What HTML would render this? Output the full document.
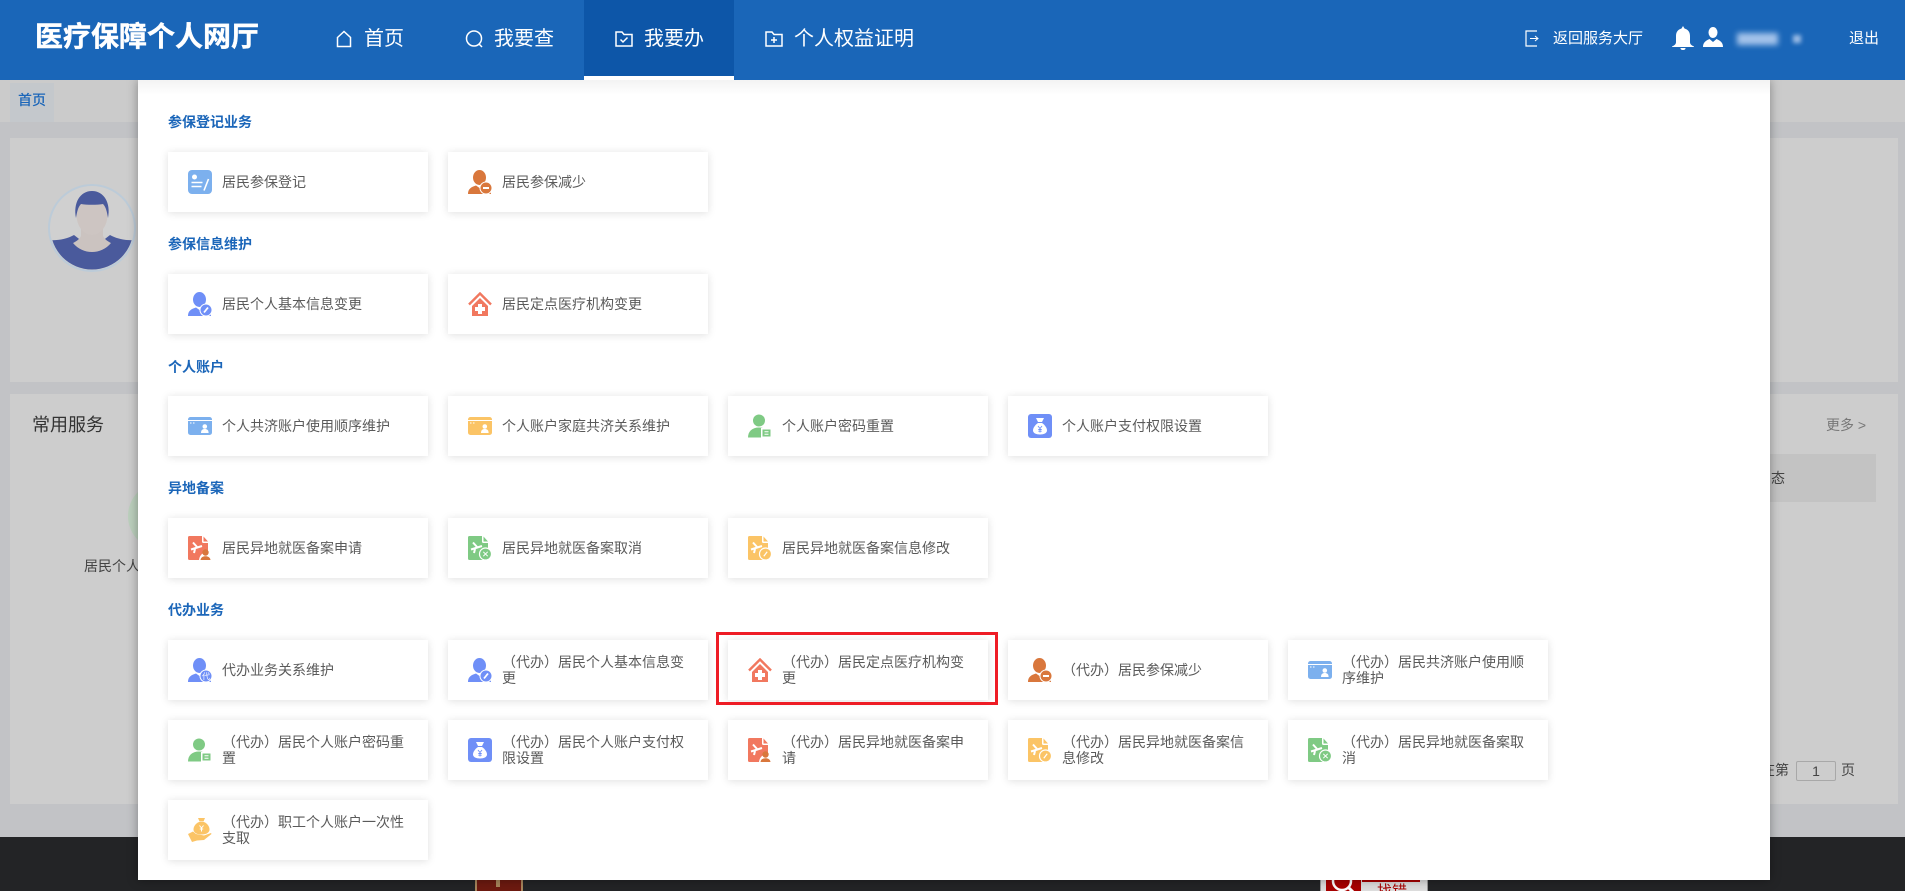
<!DOCTYPE html>
<html lang="zh-CN"><head><meta charset="utf-8"><title>医疗保障个人网厅</title>
<style>
*{box-sizing:border-box}
html,body{margin:0;padding:0;width:1905px;height:891px;overflow:hidden;background:#c2c3c6}
body{font-family:"Liberation Sans","Noto Sans CJK SC",sans-serif}
#root{position:absolute;left:0;top:0;width:1905px;height:891px;overflow:hidden;background:#c2c3c6}
.a{position:absolute;white-space:nowrap}
#hd{left:0;top:0;width:1905px;height:80px;background:#1a66b8;color:#fff;z-index:2}
.nav{position:absolute;top:24px;font-size:20px;line-height:30px;color:#fff}
.ni{position:absolute;fill:none;stroke:#fff;stroke-width:1.5}
#pn{left:138px;top:80px;width:1632px;height:800px;background:#fff;box-shadow:0 0 10px rgba(0,0,0,.35);z-index:1}
#pn:before{content:"";position:absolute;left:0;top:0;width:100%;height:15px;background:linear-gradient(#f3f3f3,#fff)}
.t{position:absolute;left:30px;font-size:14px;line-height:20px;font-weight:700;color:#1b66b9}
.c{position:absolute;width:260px;height:60px;background:#fff;box-shadow:0 1px 8px rgba(0,0,0,.13);color:#5a5a5a;font-size:14px;line-height:16px}
.c svg{position:absolute;left:20px;top:18px;width:24px;height:24px}
.c span{position:absolute;left:54px;top:50%;transform:translateY(-50%);white-space:nowrap}
</style></head><body>
<svg width="0" height="0" style="position:absolute">
<defs>
<symbol id="reg" viewBox="0 0 24 24"><rect width="24" height="24" rx="4" fill="#7cb0ee"/><circle cx="6.500" cy="7" r="2.500" fill="#fff"/><path d="M3.500 12.500h11M3.500 16.500h10" stroke="#fff" stroke-width="1.600"/><path d="M20.500 9l-4.500 11.500" stroke="#fff" stroke-width="1.600"/></symbol>
<symbol id="um" viewBox="0 0 24 24"><ellipse cx="11.500" cy="7.500" rx="6.500" ry="7.500" fill="#d9773c"/><path d="M0 24c0-5 3-7 8-8.500l3.500 2.500 3.500-2.500c5 1.500 8 3.500 8 8.500z" fill="#d9773c"/><circle cx="18" cy="18" r="6.500" fill="#fff"/><circle cx="18" cy="18" r="5.500" fill="#d9773c"/><path d="M15 18h6" stroke="#fff" stroke-width="2"/></symbol>
<symbol id="ue" viewBox="0 0 24 24"><ellipse cx="11.500" cy="7.500" rx="6.500" ry="7.500" fill="#6f8ff7"/><path d="M0 24c0-5 3-7 8-8.500l3.500 2.500 3.500-2.500c5 1.500 8 3.500 8 8.500z" fill="#6f8ff7"/><circle cx="18" cy="18" r="6.500" fill="#fff"/><circle cx="18" cy="18" r="5.500" fill="#6f8ff7"/><path d="M16 20.500l4-5" stroke="#fff" stroke-width="1.800"/></symbol>
<symbol id="ud" viewBox="0 0 24 24"><ellipse cx="11.500" cy="7.500" rx="6.500" ry="7.500" fill="#6f8ff7"/><path d="M0 24c0-5 3-7 8-8.500l3.500 2.500 3.500-2.500c5 1.500 8 3.500 8 8.500z" fill="#6f8ff7"/><circle cx="18" cy="18" r="6.500" fill="#fff"/><circle cx="18" cy="18" r="5.500" fill="#6f8ff7"/><text x="18" y="21" font-size="8" fill="#fff" text-anchor="middle" font-family="Noto Sans CJK SC, sans-serif">代</text></symbol>
<symbol id="hs" viewBox="0 0 24 24"><path d="M1 12.500L12 1.500l11 11" fill="none" stroke="#f1785f" stroke-width="2.400"/><path d="M4 14L12 6l8 8v10H4z" fill="#f1785f"/><path d="M10 12h4v3h3v4h-3v3h-4v-3H7v-4h3z" fill="#fff"/></symbol>
<symbol id="cb" viewBox="0 0 24 24"><rect y="3" width="24" height="18" rx="2.500" fill="#7cb0ee"/><path d="M0 6.500h24" stroke="#fff"/><path d="M2 9h1.500M5 9h1.500" stroke="#fff"/><circle cx="16.800" cy="12.500" r="2.300" fill="#fff"/><path d="M13 19c0-3 1.500-4 3.800-4s3.800 1 3.800 4z" fill="#fff"/></symbol>
<symbol id="cy" viewBox="0 0 24 24"><rect y="3" width="24" height="18" rx="2.500" fill="#fbc466"/><path d="M0 6.500h24" stroke="#fff"/><path d="M2 9h1.500M5 9h1.500" stroke="#fff"/><circle cx="16.800" cy="12.500" r="2.300" fill="#fff"/><path d="M13 19c0-3 1.500-4 3.800-4s3.800 1 3.800 4z" fill="#fff"/></symbol>
<symbol id="ug" viewBox="0 0 24 24"><circle cx="11" cy="6.500" r="6" fill="#7fca84"/><path d="M0 23.500c0-6 4-10 11-10s11 4 11 10z" fill="#7fca84"/><rect x="13" y="14" width="11" height="10" fill="#fff"/><rect x="14.500" y="15.500" width="8" height="7" fill="#7fca84"/><path d="M16.500 17.800h4M16.500 20.300h4" stroke="#fff"/></symbol>
<symbol id="bg" viewBox="0 0 24 24"><rect width="24" height="24" rx="3" fill="#6f8ff7"/><path d="M8 4h8l-2 4h-4z" fill="#fff"/><path d="M10 9h4c3 2 5 5 5 7.500C19 19 16 20.500 12 20.500S5 19 5 16.500C5 14 7 11 10 9z" fill="#fff"/><path d="M10 12l2 2.500 2-2.500M12 14.500v4M10.300 15.500h3.400M10.300 17.200h3.400" stroke="#6f8ff7" fill="none" stroke-width=".9"/></symbol>
<symbol id="dr" viewBox="0 0 24 24"><path d="M1.500 0H14v5.500c0 1 .5 1.500 1.500 1.500H20v17H1.500A1.500 1.500 0 0 1 0 22.500V1.500A1.500 1.500 0 0 1 1.500 0zM15.500 .5L20 5.500h-4.500z" fill="#f1785f"/><path d="M3 13.500L14 10M5 6.500l4.500 5M7 13l-1 4" stroke="#fff" stroke-width="2" fill="none"/><path d="M11 24c.5-4 2.500-6.500 6-7.500 3 1 6 3.500 6.500 7.500z" fill="#fff"/><circle cx="17.500" cy="16.500" r="3.200" fill="#d9773c"/><path d="M12.500 24c.3-2.500 2.200-3.800 5-3.800s4.700 1.300 5 3.800z" fill="#d9773c"/></symbol>
<symbol id="dg" viewBox="0 0 24 24"><path d="M1.500 0H14v5.500c0 1 .5 1.500 1.500 1.500H20v17H1.500A1.500 1.500 0 0 1 0 22.500V1.500A1.500 1.500 0 0 1 1.500 0zM15.500 .5L20 5.500h-4.500z" fill="#7fca84"/><path d="M3 13.500L14 10M5 6.500l4.500 5M7 13l-1 4" stroke="#fff" stroke-width="2" fill="none"/><circle cx="17.500" cy="18" r="6" fill="#7fca84" stroke="#fff" stroke-width="1.200"/><path d="M15.300 15.800l4.400 4.400M19.700 15.800l-4.400 4.400" stroke="#fff" stroke-width="1"/></symbol>
<symbol id="dy" viewBox="0 0 24 24"><path d="M1.500 0H14v5.500c0 1 .5 1.500 1.500 1.500H20v17H1.500A1.500 1.500 0 0 1 0 22.500V1.500A1.500 1.500 0 0 1 1.500 0zM15.500 .5L20 5.500h-4.500z" fill="#fbc466"/><path d="M3 13.500L14 10M5 6.500l4.500 5M7 13l-1 4" stroke="#fff" stroke-width="2" fill="none"/><circle cx="17.500" cy="18" r="6" fill="#fbc466" stroke="#fff" stroke-width="1.200"/><path d="M15.800 20.200l3.400-4.400" stroke="#fff" stroke-width="1.200"/></symbol>
<symbol id="hm" viewBox="0 0 24 24"><path d="M10 0h7l-1.500 3.500h-4z" fill="#fbc466"/><path d="M11 4h5c3.500 1.500 5.500 4.500 5.500 7.500 0 3-3 5-8 5s-8-2-8-5c0-3 2-6 5.500-7.500z" fill="#fbc466"/><path d="M11.500 7.500l2 2.500 2-2.500M13.500 10v3.500M11.800 11h3.400" stroke="#fff" fill="none"/><path d="M0 16l5-2.500 3 2.500 8 1.500 7-2.500.5 1L16 22l-7 .5L4 24z" fill="#fbc466"/></symbol>
</defs></svg>

<div id="root">
<!-- background page -->
<div class="a" style="left:0;top:80px;width:1905px;height:42px;background:#cbcbcb"></div>
<div class="a" style="left:10px;top:83px;width:44px;height:39px;background:#c4c8cc;color:#1b66b9;font-size:14px;line-height:34px;text-align:center;font-weight:500">首页</div>
<div class="a" style="left:10px;top:138px;width:1888px;height:244px;background:#cdcdcd"></div>
<svg class="a" style="left:47px;top:182px" width="90" height="92" viewBox="0 0 90 92">
<defs><clipPath id="cp"><circle cx="45" cy="46" r="41.500"/></clipPath></defs>
<circle cx="45" cy="46" r="43" fill="#d0d0d0" stroke="#bccbd8" stroke-width="2"/>
<g clip-path="url(#cp)">
<path d="M0 92V58c10 1 20-1 27-5l18 14 18-14c7 4 17 6 27 5v34z" fill="#4a5a9c"/>
<path d="M34 40h22v14c2 4 6 6 8 7-5 6-12 9-19 9s-14-3-19-9c2-1 6-3 8-7z" fill="#cbc3c0"/>
<ellipse cx="45" cy="33" rx="15.500" ry="20" fill="#cdc5c2"/>
<path d="M29 36c-3-15 4-27 16-27s19 12 16 27c-1-6-2-11-5-14-6 1-16 1-22 0-3 3-4 8-5 14z" fill="#4a5a9c"/>
</g></svg>
<div class="a" style="left:10px;top:394px;width:1888px;height:410px;background:#cdcdcd"></div>
<div class="a" style="left:32px;top:412px;font-size:18px;line-height:26px;color:#333">常用服务</div>
<div class="a" style="left:128px;top:482px;width:68px;height:68px;border-radius:50%;background:#bcd0bd"></div>
<div class="a" style="left:84px;top:556px;font-size:14px;line-height:20px;color:#444">居民个人基本信息</div>
<div class="a" style="left:1826px;top:415px;font-size:14px;line-height:20px;color:#777">更多 &gt;</div>
<div class="a" style="left:1740px;top:454px;width:136px;height:48px;background:#c3c3c3"></div>
<div class="a" style="left:1771px;top:468px;font-size:14px;line-height:20px;color:#444">态</div>
<div class="a" style="left:1761px;top:760px;font-size:14px;line-height:20px;color:#444">在第</div>
<div class="a" style="left:1796px;top:761px;width:40px;height:20px;border:1px solid #a8a8a8;border-radius:2px;font-size:14px;line-height:18px;text-align:center;color:#444">1</div>
<div class="a" style="left:1841px;top:760px;font-size:14px;line-height:20px;color:#444">页</div>
<div class="a" style="left:0;top:837px;width:1905px;height:54px;background:#232426"></div>
<div class="a" style="left:475px;top:870px;width:48px;height:30px;background:#6d1a10;border-left:2px solid #a8865c;border-right:2px solid #a8865c"></div>
<div class="a" style="left:496px;top:880px;width:4px;height:7px;background:#a8865c"></div>
<div class="a" style="left:1320px;top:870px;width:108px;height:30px;background:#ddd;border:1px solid #999"></div>
<div class="a" style="left:1326px;top:870px;width:35px;height:30px;background:#a80000"></div>
<svg class="a" style="left:1326px;top:870px" width="35" height="21" viewBox="0 0 35 21"><circle cx="16" cy="11" r="9" fill="none" stroke="#fff" stroke-width="2.500"/><path d="M22 17l6 6" stroke="#fff" stroke-width="3"/></svg>
<div class="a" style="left:1362px;top:880px;width:58px;height:2px;background:#a80000"></div>
<div class="a" style="left:1377px;top:882px;font-size:15px;line-height:20px;color:#a80000">找错</div>

<!-- header -->
<div class="a" id="hd">
<div class="a" style="left:35px;top:16px;font-size:28px;line-height:42px;font-weight:700;-webkit-text-stroke:.4px #fff">医疗保障个人网厅</div>
<div class="a" style="left:584px;top:0;width:150px;height:80px;background:#0d56a8;border-bottom:4px solid #fff"></div>
<svg class="ni" style="left:335px;top:30px" width="18" height="18" viewBox="0 0 18 18"><path d="M2.500 7.500L9 1.500l6.500 6V16.500h-13z"/></svg>
<div class="nav" style="left:364px">首页</div>
<svg class="ni" style="left:465px;top:30px" width="19" height="18" viewBox="0 0 19 18"><circle cx="9" cy="8.500" r="7.500"/><path d="M14 14l3 3"/></svg>
<div class="nav" style="left:494px">我要查</div>
<svg class="ni" style="left:615px;top:30px" width="18" height="18" viewBox="0 0 18 18"><path d="M1 2h6l2 2.500h8V16H1z"/><path d="M5.500 9.500l2.500 2.500 4.500-4.500"/></svg>
<div class="nav" style="left:644px">我要办</div>
<svg class="ni" style="left:765px;top:30px" width="18" height="18" viewBox="0 0 18 18"><path d="M1 2h6l2 2.500h8V16H1z"/><path d="M9 7v6M6 10h6"/></svg>
<div class="nav" style="left:794px">个人权益证明</div>
<svg class="ni" style="left:1525px;top:30px;stroke-width:1.200" width="14" height="17" viewBox="0 0 14 17"><path d="M12 1H1v15h11"/><path d="M5 8.500h8M10 6l3 2.500-3 2.500" stroke-width="1"/></svg>
<div class="a" style="left:1553px;top:28px;font-size:15px;line-height:22px">返回服务大厅</div>
<svg class="a" style="left:1672px;top:26px" width="22" height="24" viewBox="0 0 22 24"><path d="M11 0l1.500 2.500C16 3.500 18 6 18 10v6c0 2 1 3 4 4.500v.5H0v-.5C3 19 4 18 4 16v-6c0-4 2-6.500 5.500-7.500z" fill="#fff"/><path d="M8.500 22h5c0 1.500-1 2-2.500 2s-2.500-.5-2.500-2z" fill="#fff"/></svg>
<svg class="a" style="left:1703px;top:27px" width="20" height="20" viewBox="0 0 20 20"><ellipse cx="10" cy="5.500" rx="4.500" ry="5.500" fill="#fff"/><path d="M0 20c0-4 2-6 6.500-8l3.500 3 3.500-3c4.500 2 6.500 4 6.500 8z" fill="#fff"/></svg>
<div class="a" style="left:1737px;top:33px;width:41px;height:12px;background:#a4c3ea;filter:blur(3px)"></div>
<div class="a" style="left:1793px;top:35px;width:8px;height:8px;background:#9dbde6;filter:blur(2px)"></div>
<div class="a" style="left:1849px;top:28px;font-size:15px;line-height:22px">退出</div>
</div>

<!-- dropdown panel (children positioned relative to panel: x-138, y-80) -->
<div class="a" id="pn">
<div class="t" style="top:32px">参保登记业务</div>
<div class="c" style="left:30px;top:72px"><svg><use href="#reg"/></svg><span>居民参保登记</span></div>
<div class="c" style="left:310px;top:72px"><svg><use href="#um"/></svg><span>居民参保减少</span></div>

<div class="t" style="top:154px">参保信息维护</div>
<div class="c" style="left:30px;top:194px"><svg><use href="#ue"/></svg><span>居民个人基本信息变更</span></div>
<div class="c" style="left:310px;top:194px"><svg><use href="#hs"/></svg><span>居民定点医疗机构变更</span></div>

<div class="t" style="top:277px">个人账户</div>
<div class="c" style="left:30px;top:316px"><svg><use href="#cb"/></svg><span>个人共济账户使用顺序维护</span></div>
<div class="c" style="left:310px;top:316px"><svg><use href="#cy"/></svg><span>个人账户家庭共济关系维护</span></div>
<div class="c" style="left:590px;top:316px"><svg><use href="#ug"/></svg><span>个人账户密码重置</span></div>
<div class="c" style="left:870px;top:316px"><svg><use href="#bg"/></svg><span>个人账户支付权限设置</span></div>

<div class="t" style="top:398px">异地备案</div>
<div class="c" style="left:30px;top:438px"><svg><use href="#dr"/></svg><span>居民异地就医备案申请</span></div>
<div class="c" style="left:310px;top:438px"><svg><use href="#dg"/></svg><span>居民异地就医备案取消</span></div>
<div class="c" style="left:590px;top:438px"><svg><use href="#dy"/></svg><span>居民异地就医备案信息修改</span></div>

<div class="t" style="top:520px">代办业务</div>
<div class="c" style="left:30px;top:560px"><svg><use href="#ud"/></svg><span>代办业务关系维护</span></div>
<div class="c" style="left:310px;top:560px"><svg><use href="#ue"/></svg><span>（代办）居民个人基本信息变<br>更</span></div>
<div class="c" style="left:590px;top:560px"><svg><use href="#hs"/></svg><span>（代办）居民定点医疗机构变<br>更</span></div>
<div class="c" style="left:870px;top:560px"><svg><use href="#um"/></svg><span>（代办）居民参保减少</span></div>
<div class="c" style="left:1150px;top:560px"><svg><use href="#cb"/></svg><span>（代办）居民共济账户使用顺<br>序维护</span></div>

<div class="c" style="left:30px;top:640px"><svg><use href="#ug"/></svg><span>（代办）居民个人账户密码重<br>置</span></div>
<div class="c" style="left:310px;top:640px"><svg><use href="#bg"/></svg><span>（代办）居民个人账户支付权<br>限设置</span></div>
<div class="c" style="left:590px;top:640px"><svg><use href="#dr"/></svg><span>（代办）居民异地就医备案申<br>请</span></div>
<div class="c" style="left:870px;top:640px"><svg><use href="#dy"/></svg><span>（代办）居民异地就医备案信<br>息修改</span></div>
<div class="c" style="left:1150px;top:640px"><svg><use href="#dg"/></svg><span>（代办）居民异地就医备案取<br>消</span></div>

<div class="c" style="left:30px;top:720px"><svg><use href="#hm"/></svg><span>（代办）职工个人账户一次性<br>支取</span></div>

<div class="a" style="left:578px;top:552px;width:282px;height:73px;border:3px solid #ee1c25"></div>
</div>
</div>
</body></html>
